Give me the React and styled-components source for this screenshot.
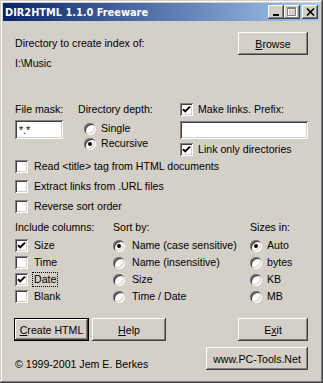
import React from "react";
import styled, { createGlobalStyle, css } from "styled-components";

// --- Classic Win2000 palette ---
const FACE = "#d4d0c8";
const SHADOW = "#808080";
const DARK = "#404040";
const LIGHT = "#ffffff";
const FONT = `"Liberation Sans", Arial, sans-serif`;

const raised = css`
  box-shadow: inset -1px -1px ${DARK}, inset 1px 1px ${LIGHT},
    inset -2px -2px ${SHADOW}, inset 2px 2px ${FACE};
`;

const sunken = css`
  box-shadow: inset 1px 1px ${SHADOW}, inset -1px -1px ${LIGHT},
    inset 2px 2px ${DARK}, inset -2px -2px ${FACE};
`;

const GlobalStyle = createGlobalStyle`
  html, body {
    margin: 0;
    padding: 0;
    background: ${FACE};
  }
  * { box-sizing: border-box; }
`;

const S = {
  Window: styled.div`
    width: 323px;
    height: 383px;
    padding: 3px;
    background: ${FACE};
    font-family: ${FONT};
    font-size: 10.6px;
    color: #000;
    box-shadow: inset -1px -1px ${DARK}, inset 1px 1px ${FACE},
      inset -2px -2px ${SHADOW}, inset 2px 2px ${LIGHT};
    display: flex;
    flex-direction: column;
  `,

  TitleBar: styled.div`
    height: 18px;
    display: flex;
    align-items: center;
    padding: 0 2px 0 2px;
    background: linear-gradient(to right, #0a246a, #a6caf0);
  `,

  Title: styled.div`
    font-family: "DejaVu Sans", Verdana, sans-serif;
    font-weight: bold;
    font-size: 9.8px;
    color: #fff;
    white-space: nowrap;
  `,

  TitleButtons: styled.div`
    margin-left: auto;
    display: flex;
  `,

  TitleButton: styled.div`
    width: 16px;
    height: 14px;
    background: ${FACE};
    ${raised};
    display: flex;
    align-items: center;
    justify-content: center;
    margin-left: ${({ $gap }) => ($gap ? "2px" : "0")};
  `,

  Content: styled.div`
    flex: 1;
    padding: 11px 12px 0 12px;
    display: flex;
    flex-direction: column;
  `,

  TopRow: styled.div`
    display: flex;
    justify-content: space-between;
    align-items: flex-start;
  `,

  TopLeft: styled.div`
    padding-top: 5px;
  `,

  Text: styled.div`
    line-height: 13px;
    white-space: nowrap;
    margin-top: ${({ $mt }) => $mt || 0}px;
  `,

  Button: styled.button`
    width: ${({ $w }) => $w}px;
    height: 23px;
    padding: 0;
    margin: 0;
    margin-left: ${({ $ml, $push }) => ($push ? "auto" : `${$ml || 0}px`)};
    font-family: ${FONT};
    font-size: 10.6px;
    color: #000;
    background: ${FACE};
    border: ${({ $default }) => ($default ? "1px solid #000" : "none")};
    ${raised};
    cursor: default;
    u { text-decoration: underline; }
  `,

  OptionsRow: styled.div`
    display: grid;
    grid-template-columns: 63px 102px 128px;
    margin-top: 33px;
  `,

  Column: styled.div`
    display: flex;
    flex-direction: column;
    align-items: flex-start;
  `,

  Field: styled.input`
    width: ${({ $w }) => $w}px;
    height: ${({ $h }) => $h}px;
    margin-top: ${({ $mt }) => $mt || 0}px;
    padding: 0 4px;
    border: none;
    outline: none;
    background: #fff;
    font-family: ${FONT};
    font-size: 10.6px;
    ${sunken};
  `,

  RadioList: styled.div`
    display: flex;
    flex-direction: column;
    margin-top: ${({ $mt }) => $mt || 0}px;
    padding-left: ${({ $indent }) => $indent || 0}px;
  `,

  OptionRow: styled.label`
    display: flex;
    align-items: center;
    height: ${({ $h }) => $h || 13}px;
    gap: ${({ $gap }) => $gap || 6}px;
    margin-top: ${({ $mt }) => $mt || 0}px;
    line-height: 13px;
    white-space: nowrap;
  `,

  Box: styled.span`
    width: 13px;
    height: 13px;
    flex: 0 0 13px;
    background: #fff;
    ${sunken};
    display: flex;
    align-items: center;
    justify-content: center;
  `,

  Radio: styled.span`
    position: relative;
    width: 12px;
    height: 12px;
    flex: 0 0 12px;
    border-radius: 50%;
    background: #fff;
    box-shadow: inset 1px 1px 0 ${SHADOW}, inset -1px -1px 0 ${LIGHT},
      inset 2px 2px 0 ${DARK}, inset -2px -2px 0 ${FACE};

    &::after {
      content: "";
      display: ${({ $on }) => ($on ? "block" : "none")};
      position: absolute;
      left: 4px;
      top: 4px;
      width: 4px;
      height: 4px;
      border-radius: 50%;
      background: #000;
    }
  `,

  Focus: styled.span`
    outline: 1px dotted #000;
    outline-offset: 0;
    padding: 0 1px;
    margin-left: -1px;
  `,

  CheckList: styled.div`
    display: flex;
    flex-direction: column;
    gap: 7px;
    margin-top: 4px;
  `,

  ColumnsRow: styled.div`
    display: grid;
    grid-template-columns: 98px 137px 1fr;
    margin-top: 8px;
  `,

  Items: styled.div`
    display: flex;
    flex-direction: column;
    margin-top: 3px;
  `,

  ButtonRow: styled.div`
    display: flex;
    align-items: center;
    margin-top: 13px;
  `,

  FooterRow: styled.div`
    display: flex;
    justify-content: space-between;
    align-items: flex-start;
    margin-top: 6px;
  `,
};

const Check = () => (
  <svg width="9" height="9" viewBox="0 0 9 9">
    <path d="M1 4.2 L3.2 6.4 L8 1.6" fill="none" stroke="#000" strokeWidth="2" />
  </svg>
);

const CheckBox = ({ on, children, ...rest }) => (
  <S.OptionRow {...rest}>
    <S.Box>{on && <Check />}</S.Box>
    <span>{children}</span>
  </S.OptionRow>
);

const RadioOption = ({ on, children, ...rest }) => (
  <S.OptionRow {...rest}>
    <S.Radio $on={on} />
    <span>{children}</span>
  </S.OptionRow>
);

const TitleIcons = {
  min: (
    <svg width="8" height="8" viewBox="0 0 8 8">
      <rect x="1" y="6" width="6" height="2" fill="#000" />
    </svg>
  ),
  max: (
    <svg width="10" height="10" viewBox="0 0 10 10">
      <path d="M1.5 1.5 h8 v8 h-8 z" fill="none" stroke="#fff" />
      <rect x="1" y="1.5" width="8" height="1" fill="#fff" />
      <path d="M0.5 0.5 h8 v8 h-8 z" fill="none" stroke="#808080" />
      <rect x="0" y="1" width="9" height="1" fill="#808080" />
    </svg>
  ),
  close: (
    <svg width="9" height="8" viewBox="0 0 9 8">
      <path d="M1 0.5 L8 7.5 M8 0.5 L1 7.5" stroke="#000" strokeWidth="1.6" />
    </svg>
  ),
};

export default function App() {
  return (
    <>
      <GlobalStyle />
      <S.Window>
        <S.TitleBar>
          <S.Title>DIR2HTML 1.1.0 Freeware</S.Title>
          <S.TitleButtons>
            <S.TitleButton>{TitleIcons.min}</S.TitleButton>
            <S.TitleButton>{TitleIcons.max}</S.TitleButton>
            <S.TitleButton $gap>{TitleIcons.close}</S.TitleButton>
          </S.TitleButtons>
        </S.TitleBar>

        <S.Content>
          <S.TopRow>
            <S.TopLeft>
              <S.Text>Directory to create index of:</S.Text>
              <S.Text $mt={7}>I:\Music</S.Text>
            </S.TopLeft>
            <S.Button $w={70}>
              <u>B</u>rowse
            </S.Button>
          </S.TopRow>

          <S.OptionsRow>
            <S.Column>
              <S.Text>File mask:</S.Text>
              <S.Field $w={48} $h={19} $mt={4} defaultValue="*.*" />
            </S.Column>
            <S.Column>
              <S.Text>Directory depth:</S.Text>
              <S.RadioList $mt={5} $indent={6}>
                <RadioOption $h={15} $gap={5}>Single</RadioOption>
                <RadioOption $h={15} $gap={5} on>
                  Recursive
                </RadioOption>
              </S.RadioList>
            </S.Column>
            <S.Column>
              <CheckBox on $gap={5}>
                Make links. Prefix:
              </CheckBox>
              <S.Field $w={128} $h={18} $mt={5} defaultValue="" />
              <CheckBox on $gap={5} $mt={4}>
                Link only directories
              </CheckBox>
            </S.Column>
          </S.OptionsRow>

          <S.CheckList>
            <CheckBox>Read &lt;title&gt; tag from HTML documents</CheckBox>
            <CheckBox>Extract links from .URL files</CheckBox>
            <CheckBox>Reverse sort order</CheckBox>
          </S.CheckList>

          <S.ColumnsRow>
            <S.Column>
              <S.Text>Include columns:</S.Text>
              <S.Items>
                <CheckBox on $h={17}>Size</CheckBox>
                <CheckBox $h={17}>Time</CheckBox>
                <S.OptionRow $h={17} $gap={6}>
                  <S.Box>
                    <Check />
                  </S.Box>
                  <S.Focus>Date</S.Focus>
                </S.OptionRow>
                <CheckBox $h={17}>Blank</CheckBox>
              </S.Items>
            </S.Column>
            <S.Column>
              <S.Text>Sort by:</S.Text>
              <S.Items>
                <RadioOption on $h={17} $gap={7}>
                  Name (case sensitive)
                </RadioOption>
                <RadioOption $h={17} $gap={7}>
                  Name (insensitive)
                </RadioOption>
                <RadioOption $h={17} $gap={7}>
                  Size
                </RadioOption>
                <RadioOption $h={17} $gap={7}>
                  Time / Date
                </RadioOption>
              </S.Items>
            </S.Column>
            <S.Column>
              <S.Text>Sizes in:</S.Text>
              <S.Items>
                <RadioOption on $h={17} $gap={5}>
                  Auto
                </RadioOption>
                <RadioOption $h={17} $gap={5}>
                  bytes
                </RadioOption>
                <RadioOption $h={17} $gap={5}>
                  KB
                </RadioOption>
                <RadioOption $h={17} $gap={5}>
                  MB
                </RadioOption>
              </S.Items>
            </S.Column>
          </S.ColumnsRow>

          <S.ButtonRow>
            <S.Button $w={75} $ml={-1} $default>
              <u>C</u>reate HTML
            </S.Button>
            <S.Button $w={74} $ml={3}>
              <u>H</u>elp
            </S.Button>
            <S.Button $w={70} $push>
              E<u>x</u>it
            </S.Button>
          </S.ButtonRow>

          <S.FooterRow>
            <S.Text $mt={11}>© 1999-2001 Jem E. Berkes</S.Text>
            <S.Button $w={102}>www.PC-Tools.Net</S.Button>
          </S.FooterRow>
        </S.Content>
      </S.Window>
    </>
  );
}
